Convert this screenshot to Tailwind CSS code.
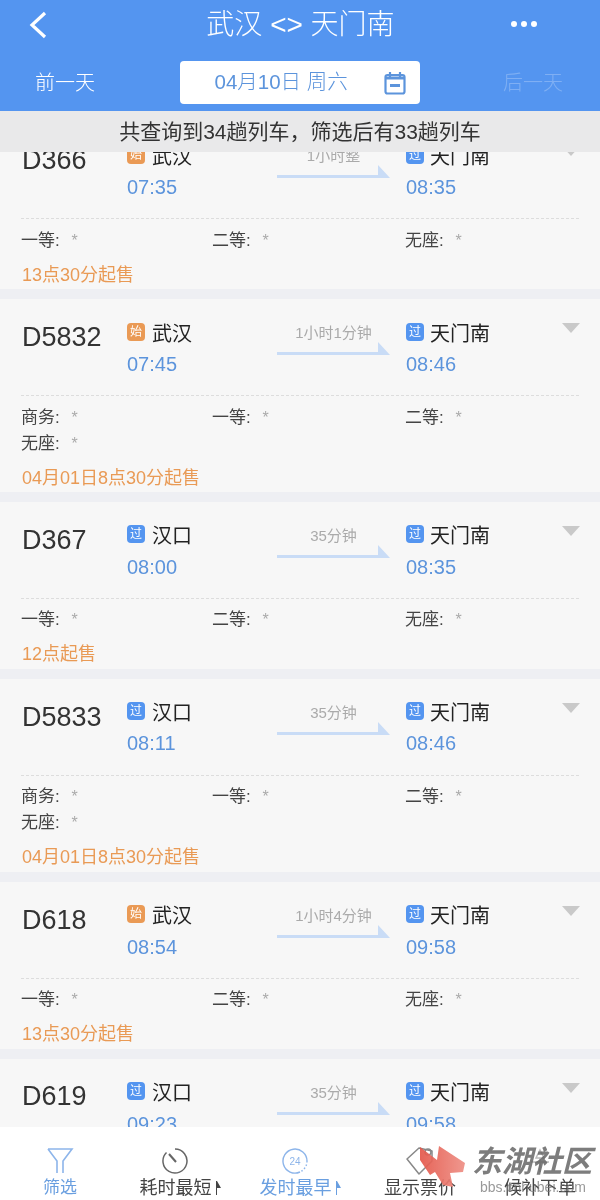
<!DOCTYPE html>
<html lang="zh-CN">
<head>
    <meta charset="UTF-8">
    <meta name="viewport" content="width=device-width, initial-scale=1.0">
    <title>武汉 - 天门南</title>
    <script src="https://cdn.jsdelivr.net/npm/@tailwindcss/browser@4"></script>
</head>
<body class="bg-white font-['Liberation_Sans','Noto_Sans_CJK_SC',sans-serif]">
<div class="relative w-[600px] h-[1200px] overflow-hidden flex flex-col bg-[#eeeff3] blur-[0.4px]">

    <!-- header -->
    <header class="h-[111px] shrink-0 bg-[#5495f0] text-white">
        <div class="h-[49px] flex items-center justify-between pl-[28px] pr-[63px]">
            <svg class="w-[20px] h-[28px]" viewBox="0 0 20 28" fill="none" stroke="white" stroke-width="3.2"><path d="M17 2 L4 14 L17 26"/></svg>
            <div class="text-[28px] leading-none font-light ml-[42px]">武汉 &lt;&gt; 天门南</div>
            <div class="flex gap-[4px] -mt-[1px]">
                <span class="w-[6px] h-[6px] rounded-full bg-white"></span>
                <span class="w-[6px] h-[6px] rounded-full bg-white"></span>
                <span class="w-[6px] h-[6px] rounded-full bg-white"></span>
            </div>
        </div>
        <div class="flex items-center justify-between pl-[35px] pr-[36px] mt-[12px]">
            <div class="text-[20px] w-[61px] font-light">前一天</div>
            <div class="w-[240px] h-[43px] rounded-[4px] bg-white text-[#5c94dc] flex items-center pl-[35px] pr-[14px] justify-between">
                <span class="text-[20.5px] font-light">04月10日 周六</span>
                <svg class="w-[22px] h-[24px]" viewBox="0 0 22 24" fill="none" stroke="#5c94dc" stroke-width="2.2"><rect x="1.5" y="4" width="19" height="18.5" rx="2"/><path d="M6 1v5M16 1v5"/><path d="M2 7h18" stroke-width="3"/><path d="M6 14.5h10" stroke-width="3"/></svg>
            </div>
            <div class="text-[20px] w-[61px] font-light text-white/25">后一天</div>
        </div>
    </header>

    <!-- train list -->
    <main class="relative flex-1 overflow-hidden pt-[11px] flex flex-col gap-[10px]">

        <div class="absolute z-10 top-0 inset-x-0 h-[41px] bg-[#e9e9ea] flex items-center justify-center text-[21px] text-[#333]">共查询到34趟列车&#65292;筛选后有33趟列车</div>

        <section class="shrink-0 h-[167px] bg-[#f7f7f7] pt-[21px] px-[21px]">
            <div class="flex h-[57px]">
                <div class="w-[106px] pl-px pt-[2px] text-[27px] leading-[30px] text-[#333]">D366</div>
                <div class="w-[150px]">
                    <div class="flex items-center h-[26px] gap-[7px] mt-px"><span class="w-[18px] h-[18px] rounded-[4px] bg-[#ea9a55] text-white text-[12px] leading-[18px] text-center -mt-[4px]">始</span><span class="text-[20px] text-[#222]">武汉</span></div>
                    <div class="mt-[4px] text-[20px] leading-[26px] text-[#5c94dc]">07:35</div>
                </div>
                <div class="w-[113px] pt-[3px] text-center text-[15px] leading-[20px] text-[#aaa]">1小时整
                    <svg class="block -mt-[2px]" width="113" height="16" viewBox="0 0 113 16"><path d="M0 11h101V1l12 13H0z" fill="#c9dcf6"/></svg>
                </div>
                <div class="flex-1 pl-[16px]">
                    <div class="flex items-center h-[26px] gap-[6px] mt-px"><span class="w-[18px] h-[18px] rounded-[4px] bg-[#5495f0] text-white text-[12px] leading-[18px] text-center -mt-[4px]">过</span><span class="text-[20px] text-[#222]">天门南</span></div>
                    <div class="mt-[4px] text-[20px] leading-[26px] text-[#5c94dc]">08:35</div>
                </div>
                <svg class="w-[18px] h-[10px] mt-[3px] -mr-px" viewBox="0 0 18 10"><path d="M0 0h18L9 10z" fill="#c9c9c9"/></svg>
            </div>
            <div class="mt-[18px] border-t border-dashed border-[#ddd] pt-[9px] grid grid-cols-[191px_193px_1fr] text-[17px] leading-[26px] text-[#444]">
                <div>一等: <span class="text-[#aaa] text-[16px] ml-[7px]">*</span></div>
                <div>二等: <span class="text-[#aaa] text-[16px] ml-[7px]">*</span></div>
                <div>无座: <span class="text-[#aaa] text-[16px] ml-[7px]">*</span></div>
            </div>
            <div class="mt-[8px] pl-px text-[18px] leading-[26px] text-[#e99a55]">13点30分起售</div>
        </section>

        <section class="shrink-0 h-[193px] bg-[#f7f7f7] pt-[21px] px-[21px]">
            <div class="flex h-[57px]">
                <div class="w-[106px] pl-px pt-[2px] text-[27px] leading-[30px] text-[#333]">D5832</div>
                <div class="w-[150px]">
                    <div class="flex items-center h-[26px] gap-[7px] mt-px"><span class="w-[18px] h-[18px] rounded-[4px] bg-[#ea9a55] text-white text-[12px] leading-[18px] text-center -mt-[4px]">始</span><span class="text-[20px] text-[#222]">武汉</span></div>
                    <div class="mt-[4px] text-[20px] leading-[26px] text-[#5c94dc]">07:45</div>
                </div>
                <div class="w-[113px] pt-[3px] text-center text-[15px] leading-[20px] text-[#aaa]">1小时1分钟
                    <svg class="block -mt-[2px]" width="113" height="16" viewBox="0 0 113 16"><path d="M0 11h101V1l12 13H0z" fill="#c9dcf6"/></svg>
                </div>
                <div class="flex-1 pl-[16px]">
                    <div class="flex items-center h-[26px] gap-[6px] mt-px"><span class="w-[18px] h-[18px] rounded-[4px] bg-[#5495f0] text-white text-[12px] leading-[18px] text-center -mt-[4px]">过</span><span class="text-[20px] text-[#222]">天门南</span></div>
                    <div class="mt-[4px] text-[20px] leading-[26px] text-[#5c94dc]">08:46</div>
                </div>
                <svg class="w-[18px] h-[10px] mt-[3px] -mr-px" viewBox="0 0 18 10"><path d="M0 0h18L9 10z" fill="#c9c9c9"/></svg>
            </div>
            <div class="mt-[18px] border-t border-dashed border-[#ddd] pt-[9px] grid grid-cols-[191px_193px_1fr] text-[17px] leading-[26px] text-[#444]">
                <div>商务: <span class="text-[#aaa] text-[16px] ml-[7px]">*</span></div>
                <div>一等: <span class="text-[#aaa] text-[16px] ml-[7px]">*</span></div>
                <div>二等: <span class="text-[#aaa] text-[16px] ml-[7px]">*</span></div>
                <div>无座: <span class="text-[#aaa] text-[16px] ml-[7px]">*</span></div>
            </div>
            <div class="mt-[8px] pl-px text-[18px] leading-[26px] text-[#e99a55]">04月01日8点30分起售</div>
        </section>

        <section class="shrink-0 h-[167px] bg-[#f7f7f7] pt-[21px] px-[21px]">
            <div class="flex h-[57px]">
                <div class="w-[106px] pl-px pt-[2px] text-[27px] leading-[30px] text-[#333]">D367</div>
                <div class="w-[150px]">
                    <div class="flex items-center h-[26px] gap-[7px]"><span class="w-[18px] h-[18px] rounded-[4px] bg-[#5495f0] text-white text-[12px] leading-[18px] text-center -mt-[4px]">过</span><span class="text-[20px] text-[#222]">汉口</span></div>
                    <div class="mt-[5px] text-[20px] leading-[26px] text-[#5c94dc]">08:00</div>
                </div>
                <div class="w-[113px] pt-[3px] text-center text-[15px] leading-[20px] text-[#aaa]">35分钟
                    <svg class="block -mt-[2px]" width="113" height="16" viewBox="0 0 113 16"><path d="M0 11h101V1l12 13H0z" fill="#c9dcf6"/></svg>
                </div>
                <div class="flex-1 pl-[16px]">
                    <div class="flex items-center h-[26px] gap-[6px]"><span class="w-[18px] h-[18px] rounded-[4px] bg-[#5495f0] text-white text-[12px] leading-[18px] text-center -mt-[4px]">过</span><span class="text-[20px] text-[#222]">天门南</span></div>
                    <div class="mt-[5px] text-[20px] leading-[26px] text-[#5c94dc]">08:35</div>
                </div>
                <svg class="w-[18px] h-[10px] mt-[3px] -mr-px" viewBox="0 0 18 10"><path d="M0 0h18L9 10z" fill="#c9c9c9"/></svg>
            </div>
            <div class="mt-[18px] border-t border-dashed border-[#ddd] pt-[8px] grid grid-cols-[191px_193px_1fr] text-[17px] leading-[26px] text-[#444]">
                <div>一等: <span class="text-[#aaa] text-[16px] ml-[7px]">*</span></div>
                <div>二等: <span class="text-[#aaa] text-[16px] ml-[7px]">*</span></div>
                <div>无座: <span class="text-[#aaa] text-[16px] ml-[7px]">*</span></div>
            </div>
            <div class="mt-[8px] pl-px text-[18px] leading-[26px] text-[#e99a55]">12点起售</div>
        </section>

        <section class="shrink-0 h-[193px] bg-[#f7f7f7] pt-[21px] px-[21px]">
            <div class="flex h-[57px]">
                <div class="w-[106px] pl-px pt-[2px] text-[27px] leading-[30px] text-[#333]">D5833</div>
                <div class="w-[150px]">
                    <div class="flex items-center h-[26px] gap-[7px]"><span class="w-[18px] h-[18px] rounded-[4px] bg-[#5495f0] text-white text-[12px] leading-[18px] text-center -mt-[4px]">过</span><span class="text-[20px] text-[#222]">汉口</span></div>
                    <div class="mt-[4px] text-[20px] leading-[26px] text-[#5c94dc]">08:11</div>
                </div>
                <div class="w-[113px] pt-[3px] text-center text-[15px] leading-[20px] text-[#aaa]">35分钟
                    <svg class="block -mt-[2px]" width="113" height="16" viewBox="0 0 113 16"><path d="M0 11h101V1l12 13H0z" fill="#c9dcf6"/></svg>
                </div>
                <div class="flex-1 pl-[16px]">
                    <div class="flex items-center h-[26px] gap-[6px]"><span class="w-[18px] h-[18px] rounded-[4px] bg-[#5495f0] text-white text-[12px] leading-[18px] text-center -mt-[4px]">过</span><span class="text-[20px] text-[#222]">天门南</span></div>
                    <div class="mt-[4px] text-[20px] leading-[26px] text-[#5c94dc]">08:46</div>
                </div>
                <svg class="w-[18px] h-[10px] mt-[3px] -mr-px" viewBox="0 0 18 10"><path d="M0 0h18L9 10z" fill="#c9c9c9"/></svg>
            </div>
            <div class="mt-[18px] border-t border-dashed border-[#ddd] pt-[8px] grid grid-cols-[191px_193px_1fr] text-[17px] leading-[26px] text-[#444]">
                <div>商务: <span class="text-[#aaa] text-[16px] ml-[7px]">*</span></div>
                <div>一等: <span class="text-[#aaa] text-[16px] ml-[7px]">*</span></div>
                <div>二等: <span class="text-[#aaa] text-[16px] ml-[7px]">*</span></div>
                <div>无座: <span class="text-[#aaa] text-[16px] ml-[7px]">*</span></div>
            </div>
            <div class="mt-[8px] pl-px text-[18px] leading-[26px] text-[#e99a55]">04月01日8点30分起售</div>
        </section>

        <section class="shrink-0 h-[167px] bg-[#f7f7f7] pt-[21px] px-[21px]">
            <div class="flex h-[57px]">
                <div class="w-[106px] pl-px pt-[2px] text-[27px] leading-[30px] text-[#333]">D618</div>
                <div class="w-[150px]">
                    <div class="flex items-center h-[26px] gap-[7px]"><span class="w-[18px] h-[18px] rounded-[4px] bg-[#ea9a55] text-white text-[12px] leading-[18px] text-center -mt-[4px]">始</span><span class="text-[20px] text-[#222]">武汉</span></div>
                    <div class="mt-[5px] text-[20px] leading-[26px] text-[#5c94dc]">08:54</div>
                </div>
                <div class="w-[113px] pt-[3px] text-center text-[15px] leading-[20px] text-[#aaa]">1小时4分钟
                    <svg class="block -mt-[2px]" width="113" height="16" viewBox="0 0 113 16"><path d="M0 11h101V1l12 13H0z" fill="#c9dcf6"/></svg>
                </div>
                <div class="flex-1 pl-[16px]">
                    <div class="flex items-center h-[26px] gap-[6px]"><span class="w-[18px] h-[18px] rounded-[4px] bg-[#5495f0] text-white text-[12px] leading-[18px] text-center -mt-[4px]">过</span><span class="text-[20px] text-[#222]">天门南</span></div>
                    <div class="mt-[5px] text-[20px] leading-[26px] text-[#5c94dc]">09:58</div>
                </div>
                <svg class="w-[18px] h-[10px] mt-[3px] -mr-px" viewBox="0 0 18 10"><path d="M0 0h18L9 10z" fill="#c9c9c9"/></svg>
            </div>
            <div class="mt-[18px] border-t border-dashed border-[#ddd] pt-[8px] grid grid-cols-[191px_193px_1fr] text-[17px] leading-[26px] text-[#444]">
                <div>一等: <span class="text-[#aaa] text-[16px] ml-[7px]">*</span></div>
                <div>二等: <span class="text-[#aaa] text-[16px] ml-[7px]">*</span></div>
                <div>无座: <span class="text-[#aaa] text-[16px] ml-[7px]">*</span></div>
            </div>
            <div class="mt-[8px] pl-px text-[18px] leading-[26px] text-[#e99a55]">13点30分起售</div>
        </section>

        <section class="shrink-0 h-[167px] bg-[#f7f7f7] pt-[21px] px-[21px]">
            <div class="flex h-[57px]">
                <div class="w-[106px] pl-px pt-px text-[27px] leading-[30px] text-[#333]">D619</div>
                <div class="w-[150px]">
                    <div class="flex items-center h-[26px] gap-[7px]"><span class="w-[18px] h-[18px] rounded-[4px] bg-[#5495f0] text-white text-[12px] leading-[18px] text-center -mt-[4px]">过</span><span class="text-[20px] text-[#222]">汉口</span></div>
                    <div class="mt-[5px] text-[20px] leading-[26px] text-[#5c94dc]">09:23</div>
                </div>
                <div class="w-[113px] pt-[3px] text-center text-[15px] leading-[20px] text-[#aaa]">35分钟
                    <svg class="block -mt-[2px]" width="113" height="16" viewBox="0 0 113 16"><path d="M0 11h101V1l12 13H0z" fill="#c9dcf6"/></svg>
                </div>
                <div class="flex-1 pl-[16px]">
                    <div class="flex items-center h-[26px] gap-[6px]"><span class="w-[18px] h-[18px] rounded-[4px] bg-[#5495f0] text-white text-[12px] leading-[18px] text-center -mt-[4px]">过</span><span class="text-[20px] text-[#222]">天门南</span></div>
                    <div class="mt-[5px] text-[20px] leading-[26px] text-[#5c94dc]">09:58</div>
                </div>
                <svg class="w-[18px] h-[10px] mt-[3px] -mr-px" viewBox="0 0 18 10"><path d="M0 0h18L9 10z" fill="#c9c9c9"/></svg>
            </div>
        </section>
    </main>

    <!-- bottom tabs -->
    <nav class="h-[73px] shrink-0 bg-white grid grid-cols-5 text-center text-[18px] leading-[24px] text-[#444] z-10">
        <div class="flex flex-col items-center pt-[20px] text-[#6a9fe0]">
            <svg class="w-[28px] h-[28px]" viewBox="0 0 28 28" fill="none" stroke="#8db5ea" stroke-width="1.6"><path d="M2 2h24L17 14v12M2 2l9 12v12"/></svg>
            <span class="text-[17px] mt-px">筛选</span>
        </div>
        <div class="flex flex-col items-center pt-[20px]">
            <svg class="w-[28px] h-[28px] -ml-[10px]" viewBox="0 0 28 28" fill="none" stroke="#666" stroke-width="1.5"><path d="M14 2A12 12 0 1 1 5.5 5.5"/><path d="M8 7l7 8" stroke-width="2"/></svg>
            <span class="mt-px flex items-center gap-[3px] whitespace-nowrap">耗时最短<svg class="w-[6px] h-[14px]" viewBox="0 0 6 14"><path d="M1 0h1l4 7H2v7H1z" fill="#444"/></svg></span>
        </div>
        <div class="flex flex-col items-center pt-[20px] text-[#6a9fe0]">
            <svg class="w-[28px] h-[28px] -ml-[10px]" viewBox="0 0 28 28" fill="none" stroke="#8db5ea" stroke-width="1.4"><path d="M19 25A12 12 0 1 1 26 14"/><path d="M26 14A12 12 0 0 1 19 25" stroke-dasharray="1.5 2"/><text x="14" y="18" text-anchor="middle" font-size="10" fill="#8db5ea" stroke="none">24</text></svg>
            <span class="mt-px flex items-center gap-[3px] whitespace-nowrap">发时最早<svg class="w-[6px] h-[14px]" viewBox="0 0 6 14"><path d="M1 0h1l4 7H2v7H1z" fill="#6a9fe0"/></svg></span>
        </div>
        <div class="flex flex-col items-center pt-[20px]">
            <svg class="w-[28px] h-[28px]" viewBox="0 0 28 28" fill="none" stroke="#888" stroke-width="1.5"><path d="M13 1L1 12l12 15 13-13V4z" stroke-linejoin="round"/><circle cx="22" cy="5" r="3"/></svg>
            <span class="mt-px whitespace-nowrap">显示票价</span>
        </div>
        <div class="flex flex-col items-center pt-[20px]">
            <svg class="w-[28px] h-[28px]" viewBox="0 0 28 28" fill="none" stroke="#bbb" stroke-width="1.5"><path d="M14 3l4 8h-8zM5 15h18M14 11v14"/></svg>
            <span class="mt-px whitespace-nowrap">候补下单</span>
        </div>
    </nav>

    <!-- watermark -->
    <div class="absolute z-20 left-[420px] top-[1143px] w-[180px] h-[57px]">
        <svg class="absolute left-0 top-0" width="48" height="52" viewBox="0 0 48 52">
            <defs><linearGradient id="brush" x1="0" x2="1" y1="0" y2="0"><stop offset="0" stop-color="#e4574a"/><stop offset="1" stop-color="#ee8f85"/></linearGradient></defs>
            <path d="M0 4L17 17 19 3 45 20 43 29 30 30 33 44 23 42 15 29 10 32 0 17z" fill="url(#brush)" fill-opacity="0.92"/>
        </svg>
        <div class="absolute left-[52px] top-px text-[30px] leading-[36px] font-bold italic text-[#666]/85 whitespace-nowrap">东湖社区</div>
        <div class="absolute left-[60px] top-[35px] text-[14px] leading-[18px] text-[#777]/75 whitespace-nowrap">bbs.cnhubei.com</div>
    </div>
</div>
</body>
</html>
